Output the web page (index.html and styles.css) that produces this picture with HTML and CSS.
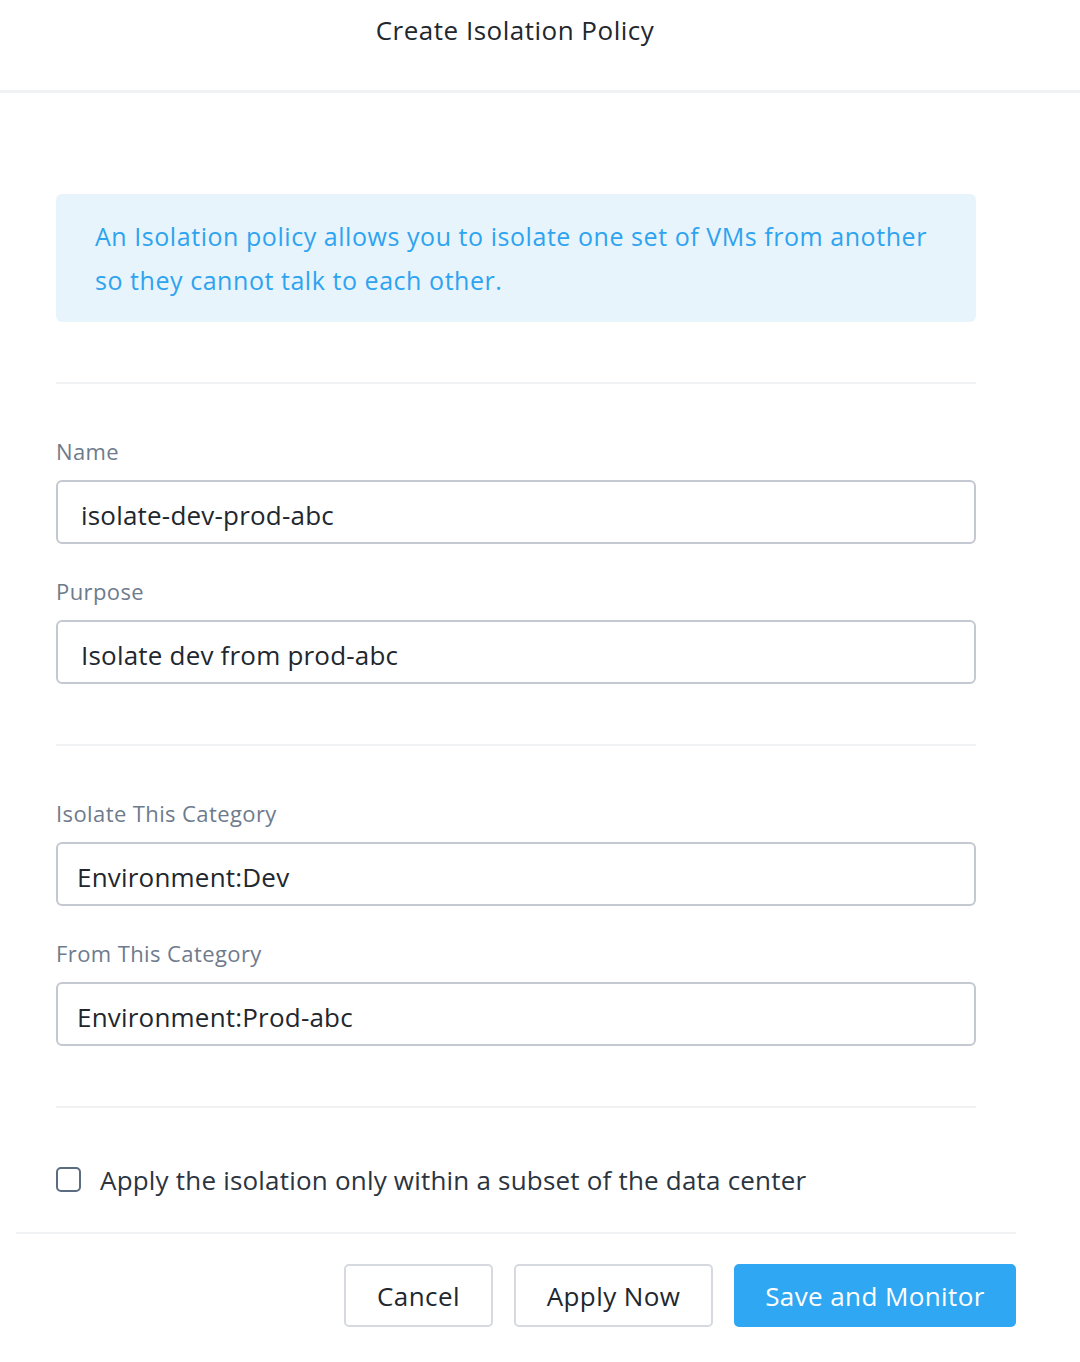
FILE: index.html
```html
<!DOCTYPE html>
<html>
<head>
<meta charset="utf-8">
<link rel="stylesheet" href="styles.css">
</head>
<body>
<div class="modal">
  <header class="header">Create Isolation Policy</header>
  <main class="content">
    <div class="info">An Isolation policy allows you to isolate one set of VMs from another so they cannot talk to each other.</div>
    <hr class="divider">
    <section class="group">
      <label class="label">Name</label>
      <div class="input">isolate-dev-prod-abc</div>
      <label class="label">Purpose</label>
      <div class="input">Isolate dev from prod-abc</div>
    </section>
    <hr class="divider">
    <section class="group">
      <label class="label">Isolate This Category</label>
      <div class="input tight">Environment:Dev</div>
      <label class="label">From This Category</label>
      <div class="input tight">Environment:Prod-abc</div>
    </section>
    <hr class="divider">
    <div class="check-row">
      <span class="checkbox"></span>
      <span class="check-text">Apply the isolation only within a subset of the data center</span>
    </div>
  </main>
  <footer class="footer">
    <button class="btn">Cancel</button>
    <button class="btn apply">Apply Now</button>
    <button class="btn primary">Save and Monitor</button>
  </footer>
</div>
</body>
</html>
```
FILE: styles.css
```css
* { box-sizing: border-box; }
html, body { margin: 0; padding: 0; background: #fff; }
body {
  font-family: "Open Sans", Lato, "Liberation Sans", sans-serif;
  width: 1080px;
  height: 1362px;
  overflow: hidden;
}
.modal { display: flex; flex-direction: column; }
.header {
  height: 93px;
  border-bottom: 3px solid #f1f2f4;
  text-align: center;
  font-size: 26px;
  letter-spacing: 0.5px;
  color: #22272e;
  padding-top: 12px;
  padding-right: 50px;
}
.content {
  margin: 0 104px 0 56px;
  padding-top: 101px;
}
.info {
  background: #e8f4fc;
  border-radius: 6px;
  height: 128px;
  padding: 20px 30px 0 39px;
  color: #2ea3ef;
  font-size: 25px;
  letter-spacing: 0.55px;
  line-height: 44px;
}
.divider {
  border: 0;
  border-top: 2px solid #f0f1f3;
  margin: 60px 0 0 0;
}
.group { padding-top: 52px; }
.label {
  display: block;
  font-size: 22px;
  letter-spacing: 0.4px;
  color: #6e7b8c;
  height: 44px;
  line-height: 30px;
}
.input {
  height: 64px;
  border: 2px solid #c3c8d1;
  border-radius: 6px;
  padding-left: 23px;
  padding-top: 5px;
  font-size: 26px;
  letter-spacing: 0.2px;
  color: #22272e;
  display: flex;
  align-items: center;
  margin-bottom: 32px;
}
.group .input:last-child { margin-bottom: 0; }
.input.tight { padding-left: 19px; }
.check-row {
  display: flex;
  align-items: center;
  padding-top: 45px;
  height: 98px;
}
.checkbox {
  width: 25px;
  height: 25px;
  border: 2px solid #5b6b80;
  border-radius: 5px;
  margin-right: 19px;
  flex: none;
}
.check-text {
  font-size: 26px;
  letter-spacing: 0.2px;
  color: #2b3440;
}
.footer {
  margin: 26px 64px 0 16px;
  border-top: 2px solid #f0f1f3;
  padding-top: 30px;
  display: flex;
  justify-content: flex-end;
  gap: 21px;
}
.btn {
  font-family: inherit;
  height: 63px;
  border: 2px solid #d6dae0;
  border-radius: 5px;
  background: #fff;
  color: #22272e;
  font-size: 26px;
  letter-spacing: 0.4px;
  padding: 0;
  width: 149px;
}
.btn.apply { width: 199px; }
.btn.primary {
  width: 282px;
  background: #2fa7f2;
  border-color: #2fa7f2;
  color: #fff;
}
```
